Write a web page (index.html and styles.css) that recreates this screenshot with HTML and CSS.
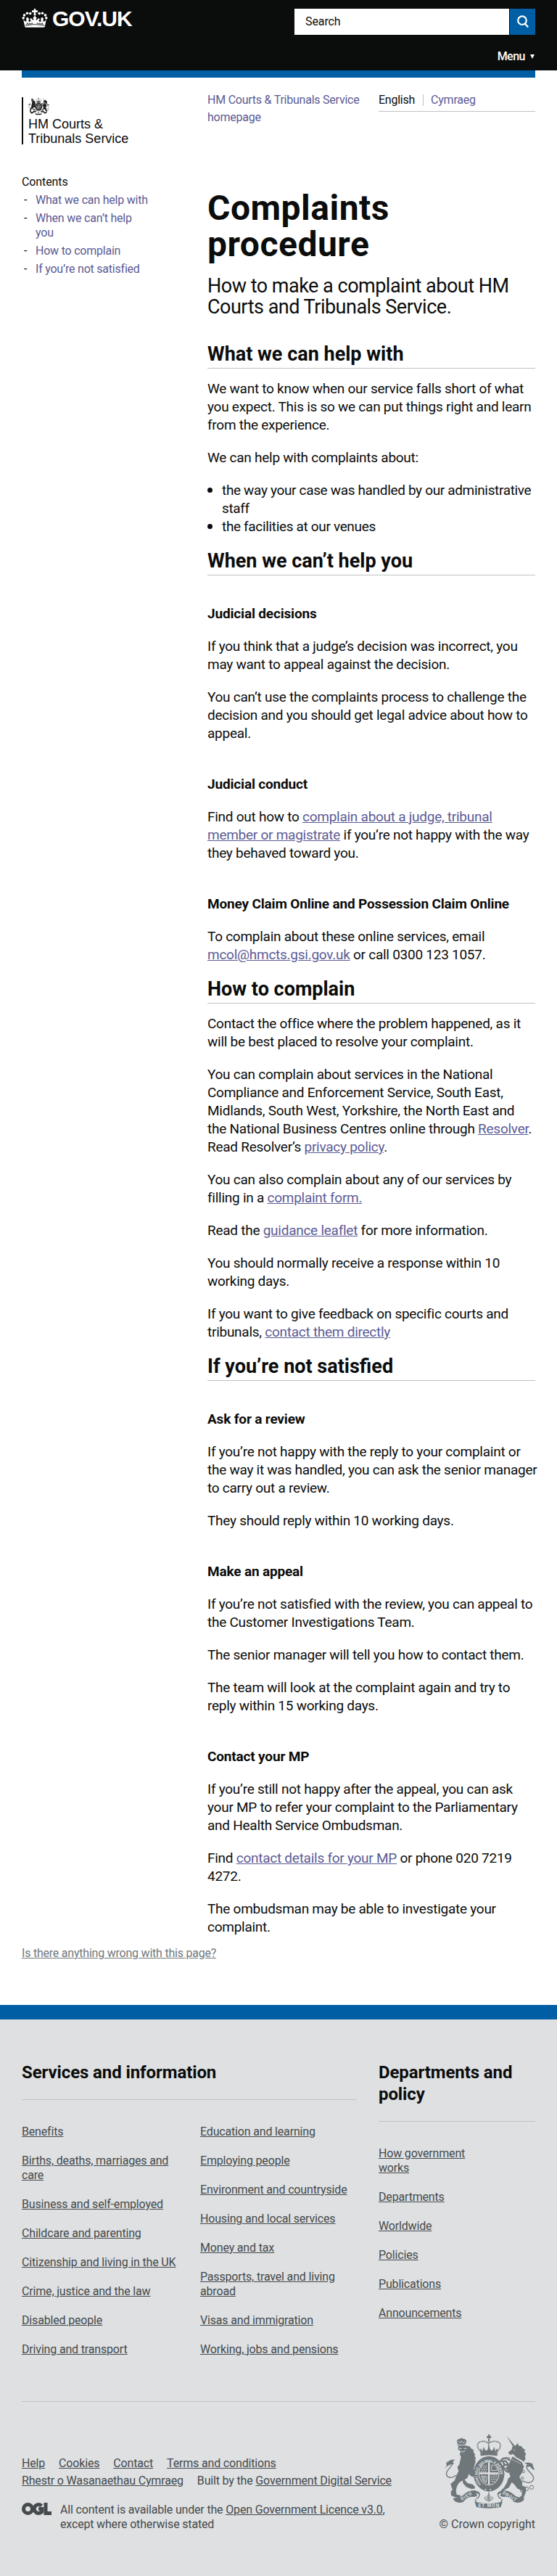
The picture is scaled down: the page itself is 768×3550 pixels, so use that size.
FILE: index.html
```html
<!DOCTYPE html>
<html lang="en">
<head>
<meta charset="utf-8">
<title>Complaints procedure - HM Courts &amp; Tribunals Service - GOV.UK</title>
<link rel="stylesheet" href="styles.css">
</head>
<body>
<svg class="defs" width="0" height="0" aria-hidden="true">
  <symbol id="arms" viewBox="69 75 376 307">
    <!-- crown -->
    <path d="M249 75h8l-1 7h6v8h-7l2 13h-8l2-13h-7v-8h6z"/>
    <path d="M218 144c-14-12-17-31-5-37 14-7 31-4 36 4M288 144c14-12 17-31 5-37-14-7-31-4-38 4M252 104v36" fill="none" stroke="currentColor" stroke-width="5" stroke-dasharray="5 2"/>
    <path d="M217 152l1-20 9 12 3-18 9 16 8-3 6-18 6 18 8 3 9-16 3 18 9-12 1 20z"/>
    <path d="M217 153q36-9 72 0l-2 11q-34-7-68 0z"/>
    <!-- garter and shield -->
    <ellipse cx="253" cy="238" rx="64" ry="73"/>
    <ellipse cx="253" cy="236" rx="42" ry="49" class="arms-line" stroke-width="3"/>
    <path d="M253 190v92M214 236h78" class="arms-line" stroke-width="7"/>
    <path d="M222 205h22M219 213h26M222 221h22M218 229h26M263 243h24M262 252h25M262 261h22M264 270h14" class="arms-line" stroke-width="3" stroke-dasharray="6 3"/>
    <path d="M264 225v-23q18-3 25 21zM222 247q2 25 20 27l3-24zM228 248l3 20M235 249l2 23" class="arms-line" stroke-width="2.5"/>
    <circle cx="239" cy="303" r="3" class="arms-dot"/><circle cx="259" cy="304" r="3" class="arms-dot"/>
    <!-- lion -->
    <path d="M122 110q-5-12 3-15 3-4 9-1l3-5h6l2 5q7-3 11 3 7 4 1 13l-3 7h-29z"/>
    <path d="M125 102l8 9 6-10 8 10 7-9" class="arms-line" stroke-width="2.5"/>
    <path d="M123 122q25-7 50 3l7 9 10 5-2 7 8 13-3 5 6 10-4 5 3 7-5 17-4 17 10 12-2 15-7-3-3 8-8-4-10-9-4 14-13 10 12 14 21 5 10 9-1 9-14 1-20-8-14-15-3-13-15 11-8 14-4 17 3 17 17 4-3 9-18-1-19-8-1-18 7-5-4-10-4-15 17-15 7-21 9-17-5-17 8-11 7-31-5-11 4-12-12-9 3-14-4-10z"/>
    <path d="M128 133h12M149 133h11M137 144l8 4 9-6" class="arms-line" stroke-width="3"/>
    <path d="M116 244c-23 20-48 5-37-16 10-17 29-27 21-41" fill="none" stroke="currentColor" stroke-width="4"/>
    <path d="M69 218l8-12-1-14 19-12 17-1-10 10 7 7-16 4-12 5z"/>
    <!-- unicorn -->
    <path d="M326 81l36 43-8 3z"/>
    <path d="M350 126l15-6 7-10 5 12 11 1 5 9 9 5-1 10 6 9-5 9 3 11-7 12-15-10-17-8-12-14-15 3-6-10 14-11z"/>
    <circle cx="358" cy="139" r="2.5" class="arms-dot"/>
    <path d="M351 166l39 24 8 18-7 24-12 19 13 21-2 14 17 9-1 19-10 25-17 4 1-8 9-7 2-19-22-12-9-13-12-11-12 22-19 10-14 9 1-8 12-11 12-21 5-17 9-7-5-16-9-20z"/>
    <path d="M341 183l-16-11-16 4-8 9 10 1 11-2 12 16M340 205l-20-5-9 7 12 18 9 6 3-8-10-11 17 7M310 184l8 19M305 178l9-3" fill="none" stroke="currentColor" stroke-width="7"/>
    <path d="M349 179l38 18" class="arms-line" stroke-width="3" stroke-dasharray="4 3"/>
    <path d="M392 266c29 20 57 1 42-21-11-17-29-25-24-43" fill="none" stroke="currentColor" stroke-width="4"/>
    <path d="M443 222l-7-15-2-11-17-5-17 2 12 6-5 10 17-1 9 11z"/>
    <g fill="none" stroke="currentColor" stroke-width="3"><circle cx="377" cy="293" r="7"/><circle cx="390" cy="307" r="7"/><circle cx="409" cy="300" r="8"/><circle cx="430" cy="294" r="8"/><circle cx="335" cy="175" r="5"/><circle cx="329" cy="215" r="5"/><circle cx="397" cy="229" r="5"/><circle cx="392" cy="256" r="5"/></g>
    <!-- scroll -->
    <path d="M104 339q28-2 42-13 24-21 47-19 25 5 23 18l-8-3-8-6 4 14-12 4q-26-6-45 20-23 10-39-5z"/>
    <path d="M400 339q-28-2-42-13-24-21-47-19-25 5-23 18l8-3 8-6-4 14 12 4q26-6 45 20 23 10 39-5z"/>
    <path d="M194 354q57 15 115 0l-7 22q-49 10-101 0z"/>
    <path d="M214 322q-2 17-14 19M290 322q2 17 14 19M195 344l6 14M308 344l-6 14" fill="none" stroke="currentColor" stroke-width="4"/>
    <path d="M252 312v43M252 322q-9 6-2 16M252 322q9 6 2 16M248 343q-10 6-13-3 1-9 9-4l7 8M256 343q10 6 13-3-1-9-9-4l-7 8M242 349h20" fill="none" stroke="currentColor" stroke-width="3"/>
  </symbol>
</svg>

<header class="site-header">
  <div class="header-top">
    <a class="logo" href="#">
      <svg class="crown" viewBox="31 24 106 79" aria-hidden="true">
        <path d="M80 24h8l-1 7h9v8h-9l2 13h-10l2-13h-9v-8h9z"/>
        <circle cx="65" cy="44" r="5.5"/><circle cx="52" cy="43" r="5.5"/><circle cx="40" cy="51" r="5.5"/><circle cx="36" cy="63" r="5.5"/>
        <circle cx="103" cy="44" r="5.5"/><circle cx="116" cy="43" r="5.5"/><circle cx="128" cy="51" r="5.5"/><circle cx="132" cy="63" r="5.5"/>
        <path d="M42 99l-6-30q7 11 13 8l-1-13 5-5 6 6-1 12q6 4 10-3l-5-5 5-6 7 8 5-1-4-7 8-10 8 10-4 7 5 1 7-8 5 6-5 5q4 7 10 3l-1-12 6-6 5 5-1 13q6 3 13-8l-6 30q-42-11-84 0z"/>
        <path d="M50 92l3-9 5 7 5-6 4 6 5-7 3 5M118 92l-3-9-5 7-5-6-4 6-5-7-3 5" class="crown-line"/>
        <path d="M42 94q42-10 84 0l-2 8H44z"/>
        <path d="M43 94q41-9 82 0" class="crown-line"/>
      </svg>
      <span class="logo-text">GOV.UK</span>
    </a>
    <form class="search">
      <span class="search-field">Search</span>
      <span class="search-button">
        <svg viewBox="0 0 18 18" width="18" height="18" aria-hidden="true"><circle cx="8" cy="7.2" r="5.8"/><path d="M11.8 11.6l4.4 5"/></svg>
      </span>
    </form>
  </div>
  <div class="menu">Menu <span class="menu-arrow"></span></div>
</header>

<div class="wrapper">
  <div class="blue-bar"></div>
  <div class="meta">
    <div class="org">
      <svg class="org-crest" aria-hidden="true"><use href="#arms"/></svg>
      <div class="org-name">HM Courts &amp;<br>Tribunals Service</div>
    </div>
    <a class="org-home" href="#">HM Courts &amp; Tribunals Service<br>homepage</a>
    <div class="languages"><span class="lang-current">English</span><a class="lang-other" href="#">Cymraeg</a></div>
  </div>

  <div class="columns">
    <nav class="contents">
      <div class="contents-title">Contents</div>
      <ol class="contents-list">
        <li><a href="#help">What we can help with</a></li>
        <li><a href="#cant">When we can’t help<br>you</a></li>
        <li><a href="#how">How to complain</a></li>
        <li><a href="#not">If you’re not satisfied</a></li>
      </ol>
    </nav>
    <main class="content">
      <h1>Complaints<br>procedure</h1>
      <p class="lead">How to make a complaint about HM<br>Courts and Tribunals Service.</p>

      <h2 id="help">What we can help with</h2>
      <p>We want to know when our service falls short of what<br>you expect. This is so we can put things right and learn<br>from the experience.</p>
      <p>We can help with complaints about:</p>
      <ul class="bullets">
        <li>the way your case was handled by our administrative<br>staff</li>
        <li>the facilities at our venues</li>
      </ul>

      <h2 id="cant">When we can’t help you</h2>
      <h3>Judicial decisions</h3>
      <p>If you think that a judge’s decision was incorrect, you<br>may want to appeal against the decision.</p>
      <p>You can’t use the complaints process to challenge the<br>decision and you should get legal advice about how to<br>appeal.</p>
      <h3>Judicial conduct</h3>
      <p>Find out how to <a href="#">complain about a judge, tribunal<br>member or magistrate</a> if you’re not happy with the way<br>they behaved toward you.</p>
      <h3>Money Claim Online and Possession Claim Online</h3>
      <p>To complain about these online services, email<br><a href="#">mcol@hmcts.gsi.gov.uk</a> or call 0300 123 1057.</p>

      <h2 id="how">How to complain</h2>
      <p>Contact the office where the problem happened, as it<br>will be best placed to resolve your complaint.</p>
      <p>You can complain about services in the National<br>Compliance and Enforcement Service, South East,<br>Midlands, South West, Yorkshire, the North East and<br>the National Business Centres online through <a href="#">Resolver</a>.<br>Read Resolver’s <a href="#">privacy policy</a>.</p>
      <p>You can also complain about any of our services by<br>filling in a <a href="#">complaint form.</a></p>
      <p>Read the <a href="#">guidance leaflet</a> for more information.</p>
      <p>You should normally receive a response within 10<br>working days.</p>
      <p>If you want to give feedback on specific courts and<br>tribunals, <a href="#">contact them directly</a></p>

      <h2 id="not">If you’re not satisfied</h2>
      <h3>Ask for a review</h3>
      <p>If you’re not happy with the reply to your complaint or<br>the way it was handled, you can ask the senior manager<br>to carry out a review.</p>
      <p>They should reply within 10 working days.</p>
      <h3>Make an appeal</h3>
      <p>If you’re not satisfied with the review, you can appeal to<br>the Customer Investigations Team.</p>
      <p>The senior manager will tell you how to contact them.</p>
      <p>The team will look at the complaint again and try to<br>reply within 15 working days.</p>
      <h3>Contact your MP</h3>
      <p>If you’re still not happy after the appeal, you can ask<br>your MP to refer your complaint to the Parliamentary<br>and Health Service Ombudsman.</p>
      <p>Find <a href="#">contact details for your MP</a> or phone 020 7219<br>4272.</p>
      <p>The ombudsman may be able to investigate your<br>complaint.</p>
    </main>
  </div>
  <div class="report"><a href="#">Is there anything wrong with this page?</a></div>
</div>

<footer class="footer">
  <div class="footer-nav">
    <section class="services">
      <h2>Services and information</h2>
      <div class="service-columns">
        <ul>
          <li><a href="#">Benefits</a></li>
          <li><a href="#">Births, deaths, marriages and<br>care</a></li>
          <li><a href="#">Business and self-employed</a></li>
          <li><a href="#">Childcare and parenting</a></li>
          <li><a href="#">Citizenship and living in the UK</a></li>
          <li><a href="#">Crime, justice and the law</a></li>
          <li><a href="#">Disabled people</a></li>
          <li><a href="#">Driving and transport</a></li>
        </ul>
        <ul>
          <li><a href="#">Education and learning</a></li>
          <li><a href="#">Employing people</a></li>
          <li><a href="#">Environment and countryside</a></li>
          <li><a href="#">Housing and local services</a></li>
          <li><a href="#">Money and tax</a></li>
          <li><a href="#">Passports, travel and living<br>abroad</a></li>
          <li><a href="#">Visas and immigration</a></li>
          <li><a href="#">Working, jobs and pensions</a></li>
        </ul>
      </div>
    </section>
    <section class="departments">
      <h2>Departments and<br>policy</h2>
      <ul>
        <li><a href="#">How government<br>works</a></li>
        <li><a href="#">Departments</a></li>
        <li><a href="#">Worldwide</a></li>
        <li><a href="#">Policies</a></li>
        <li><a href="#">Publications</a></li>
        <li><a href="#">Announcements</a></li>
      </ul>
    </section>
  </div>
  <div class="footer-meta">
    <div class="footer-info">
      <div class="info-row"><a href="#">Help</a><a href="#">Cookies</a><a href="#">Contact</a><a href="#">Terms and conditions</a></div>
      <div class="info-row"><a href="#">Rhestr o Wasanaethau Cymraeg</a><span>Built by the <a href="#">Government Digital Service</a></span></div>
      <div class="licence">
        <svg class="ogl" viewBox="0 0 41 17" role="img" aria-label="Open Government Licence"><circle cx="8.5" cy="8.5" r="6"/><path d="M27.5 4.3a6 6 0 1 0 .2 8.2V8.5h-4.5M33 0v14.4h8"/></svg>
        <p>All content is available under the <a href="#">Open Government Licence v3.0</a>,<br>except where otherwise stated</p>
      </div>
    </div>
    <div class="copyright">
      <svg class="footer-crest" viewBox="69 75 376 307" aria-hidden="true">
        <use href="#arms" x="69" y="75" width="376" height="307"/>
        <path id="garter" d="M220 281A47 54 0 1 1 286 281" fill="none"/>
        <g class="motto">
          <text class="garter-text"><textPath href="#garter">HONI SOIT QUI MAL Y PENSE</textPath></text>
          <text transform="translate(140 349) rotate(-31)" textLength="50">DIEU</text>
          <text x="209" y="375" textLength="86">ET MON</text>
          <text transform="translate(308 320) rotate(31)" textLength="64">DROIT</text>
        </g>
      </svg>
      <a href="#">© Crown copyright</a>
    </div>
  </div>
</footer>
</body>
</html>
```
FILE: styles.css
```css
*, *::before { box-sizing: border-box; }
body, h1, h2, h3, p, ul, ol { margin: 0; padding: 0; }
body {
  background: #fff;
  color: #0b0c0c;
  font-family: Roboto, "Liberation Sans", sans-serif;
  font-size: 16px;
  line-height: 20px;
  letter-spacing: -0.24px;
  white-space: nowrap;
}
ul, ol { list-style: none; }
a { color: #5b5b95; }
.defs { display: block; }

.site-header { height: 97px; padding: 12px 30px 0; background: #0b0c0c; color: #fff; }
.header-top { display: flex; justify-content: space-between; height: 36px; }
.logo { display: flex; height: 26px; color: #fff; text-decoration: none; }
.crown { width: 36px; height: 26px; fill: #fff; }
.crown-line { fill: none; stroke: #0b0c0c; stroke-width: 2.5; }
.logo-text { margin-left: 6px; font: bold 30px/28px "Liberation Sans", Arial, sans-serif; letter-spacing: -1px; }
.search { display: flex; gap: 1px; width: 332px; }
.search-field { flex: 1; padding: 0 15px; background: #fff; color: #0b0c0c; line-height: 36px; letter-spacing: -0.1px; }
.search-button { display: flex; width: 35px; align-items: center; justify-content: center; background: #005ea5; }
.search-button svg { fill: none; stroke: #fff; stroke-width: 2.2; }
.menu { display: flex; align-items: center; justify-content: flex-end; gap: 7px; margin-top: 20px; padding-right: 1px; font-weight: 500; letter-spacing: -0.5px; }
.menu-arrow { border: 3px solid transparent; border-top: 6px solid #fff; border-bottom: 0; }

.wrapper { padding: 0 30px; }
.blue-bar { height: 10px; background: #005ea5; }
.meta { display: grid; grid-template-columns: 256px 236px 216px; padding-top: 27px; height: 92px; }
.org { width: 160px; height: 65px; padding-left: 7px; border-left: 2px solid #0b0c0c; }
.org-crest { display: block; width: 29px; height: 25px; }
.org-name { margin-top: 2px; font: 18px/20px "Liberation Sans", Arial, sans-serif; letter-spacing: 0; }
.org-home { margin-top: -8px; line-height: 24px; text-decoration: none; }
.languages { display: flex; height: 26px; margin-top: -6px; border-bottom: 1px solid #bfc1c3; }
.lang-current { height: 16px; margin-top: 2px; padding-right: 11px; border-right: 1px solid #bfc1c3; line-height: 16px; }
.lang-other { padding-left: 10px; line-height: 20px; text-decoration: none; }

.columns { display: grid; grid-template-columns: 256px 452px; padding-top: 42px; }
.contents-title { margin-bottom: 5px; letter-spacing: -0.1px; }
.contents-list { letter-spacing: -0.22px; }
.contents-list li { display: flex; margin-bottom: 5px; }
.contents-list li::before { content: "-"; flex: none; width: 19px; padding-left: 3px; color: #0b0c0c; }
.contents-list a { text-decoration: none; }

.content { display: flex; flex-direction: column; padding-top: 21px; font-size: 19px; line-height: 25px; letter-spacing: -0.26px; }
.content h1 { margin-bottom: 18px; font-size: 48px; line-height: 50px; letter-spacing: 0.5px; }
.content .lead { margin-bottom: 35px; font-size: 27px; line-height: 29px; letter-spacing: -0.5px; }
.content h2 { margin-bottom: 15px; padding-bottom: 4px; border-bottom: 1px solid #bfc1c3; font-size: 27px; line-height: 30px; letter-spacing: 0; }
.content h3 { margin: 25px 0 20px; font-size: 19px; letter-spacing: -0.17px; }
.content p, .bullets { margin-bottom: 20px; }
.bullets { letter-spacing: -0.34px; }
.bullets li { display: flex; }
.bullets li::before { content: ""; flex: none; width: 7px; height: 7px; margin: 9px 13px 0 0; border-radius: 50%; background: #0b0c0c; }

.report { margin-top: -6px; margin-bottom: 61px; letter-spacing: -0.22px; }
.report a { color: #6f777b; }

.footer { height: 787px; padding: 58px 30px 0; border-top: 20px solid #005ea5; background: #dee0e2; color: #454a4c; letter-spacing: -0.17px; }
.footer a { color: #454a4c; }
.footer-nav { display: grid; grid-template-columns: 462px 216px; gap: 30px; height: 469px; border-bottom: 1px solid #bfc1c3; }
.footer h2 { padding-bottom: 22px; border-bottom: 1px solid #bfc1c3; color: #0b0c0c; font-size: 24px; line-height: 30px; letter-spacing: -0.1px; }
.service-columns { display: grid; grid-template-columns: 246px 216px; }
.footer ul { display: flex; flex-direction: column; gap: 20px; padding-top: 34px; }
.footer-meta { display: flex; justify-content: space-between; }
.footer-info { padding-top: 73px; }
.info-row { display: flex; gap: 19px; line-height: 24px; }
.licence { display: flex; gap: 12px; margin-top: 18px; }
.ogl { width: 41px; height: 17px; fill: none; stroke: #454a4c; stroke-width: 5; }
.copyright { display: flex; flex-direction: column; align-items: flex-end; padding-top: 45px; letter-spacing: 0; }
.copyright a { margin-top: 12px; text-decoration: none; }

#arms { fill: currentColor; }
.footer-crest { width: 125px; height: 102px; color: #6f777b; --arms-gap: #dee0e2; }
.org-crest { color: #222; --arms-gap: #fff; }
.arms-line { fill: none; stroke: var(--arms-gap); }
.arms-dot { fill: var(--arms-gap); }
.motto text { fill: var(--arms-gap); font-size: 19px; font-weight: bold; letter-spacing: 0; }
.motto .garter-text { font-size: 15px; }
```
